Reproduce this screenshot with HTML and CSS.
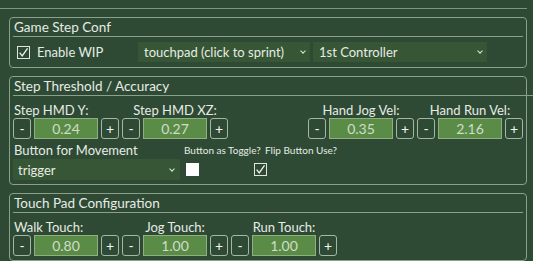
FILE: index.html
```html
<!DOCTYPE html>
<html>
<head>
	<meta charset="utf-8">
	<title>Step Detection</title>
	<link rel="stylesheet" href="styles.css">
</head>
<body>
	<!-- page header line (heading scrolled out of view) -->
	<div class="pagehead"></div>

	<!-- Game Step Conf -->
	<section class="frame f-conf">
		<h3 class="ftitle">Game Step Conf</h3>
		<div class="row row-conf">
			<label class="check">
				<span class="box on"><svg viewBox="0 0 12 12"><path d="M1.8 6.2 L4.6 9.8 L10.4 1.6" /></svg></span>
				Enable WIP
			</label>
			<div class="drop drop-mode"><span>touchpad (click to sprint)</span><i class="chev"></i></div>
			<div class="drop drop-ctrl"><span>1st Controller</span><i class="chev"></i></div>
		</div>
	</section>

	<!-- Step Threshold / Accuracy -->
	<section class="frame">
		<h3 class="ftitle wide">Step Threshold / Accuracy</h3>
		<div class="row spread">
			<div class="groups">
				<div class="group first">
					<p class="lbl">Step HMD Y:</p>
					<div class="spin"><button>-</button><div class="val">0.24</div><button>+</button></div>
				</div>
				<div class="group">
					<p class="lbl">Step HMD XZ:</p>
					<div class="spin"><button>-</button><div class="val">0.27</div><button>+</button></div>
				</div>
			</div>
			<div class="groups">
				<div class="group">
					<p class="lbl">Hand Jog Vel:</p>
					<div class="spin"><button>-</button><div class="val">0.35</div><button>+</button></div>
				</div>
				<div class="group">
					<p class="lbl">Hand Run Vel:</p>
					<div class="spin"><button>-</button><div class="val">2.16</div><button>+</button></div>
				</div>
			</div>
		</div>
		<div class="row row-btn">
			<div class="col col-move">
				<p class="lbl">Button for Movement</p>
				<div class="drop drop-trig"><span>trigger</span><i class="chev"></i></div>
			</div>
			<div class="col col-toggle">
				<p class="small">Button as Toggle?</p>
				<span class="box white"></span>
			</div>
			<div class="col col-flip">
				<p class="small">Flip Button Use?</p>
				<span class="box on"><svg viewBox="0 0 12 12"><path d="M1.8 6.2 L4.6 9.8 L10.4 1.6" /></svg></span>
			</div>
		</div>
	</section>

	<!-- Touch Pad Configuration -->
	<section class="frame">
		<h3 class="ftitle">Touch Pad Configuration</h3>
		<div class="row spread">
			<div class="groups">
				<div class="group first">
					<p class="lbl">Walk Touch:</p>
					<div class="spin"><button>-</button><div class="val">0.80</div><button>+</button></div>
				</div>
				<div class="group">
					<p class="lbl">Jog Touch:</p>
					<div class="spin"><button>-</button><div class="val">1.00</div><button>+</button></div>
				</div>
				<div class="group">
					<p class="lbl">Run Touch:</p>
					<div class="spin"><button>-</button><div class="val">1.00</div><button>+</button></div>
				</div>
			</div>
		</div>
	</section>
</body>
</html>
```

FILE: styles.css
```css
*{margin: 0;padding: 0;box-sizing: border-box;}
body{background-color: #2e4a35;color: #e6ece4;font-family: Lato,"Liberation Sans",sans-serif;font-size: 13px;overflow: hidden;}

.pagehead{height: 9px;border-bottom: 1px solid #7d957f;margin-right: 6px;}

.frame{margin: 8px 6px 0 9px;border: 1px solid #8aa08b;border-radius: 4px;padding: 0 3px 4px 3px;}
.f-conf{padding-bottom: 5px;}
.ftitle{font-size: 13.5px;font-weight: normal;line-height: 18px;height: 19px;border-bottom: 1px solid #8aa08b;padding-left: 1px;}
.ftitle.wide{margin-right: -12px;}

.row{display: flex;}
.row-conf{margin-top: 5px;align-items: center;}
.spread{justify-content: space-between;margin-top: 6px;}

/* checkbox */
.check{display: flex;align-items: center;width: 125px;padding-left: 4px;font-size: 13px;}
.box{display: inline-block;width: 13px;height: 13px;flex: none;}
.box.on{border: 1px solid #dfe6de;}
.box.on svg{display: block;width: 11px;height: 11px;}
.box.on path{fill: none;stroke: #f2f5f1;stroke-width: 1.4;}
.box.white{background-color: #fff;}
.check .box{margin-right: 7px;}

/* dropdowns */
.drop{display: flex;align-items: center;justify-content: space-between;height: 20px;background-color: #375635;padding: 0 5px 0 6px;font-size: 13px;white-space: nowrap;}
.drop-mode{width: 172px;}
.drop-ctrl{width: 174px;margin-left: 3px;}
.drop-trig{width: 167px;height: 21px;margin-top: 1px;padding-left: 5px;padding-right: 6px;}
.chev{display: block;width: 4px;height: 4px;border-right: 1px solid #dfe6de;border-bottom: 1px solid #dfe6de;transform: rotate(45deg);margin-top: -2px;}

/* spin boxes */
.groups{display: flex;gap: 3px;}
.group{display: flex;flex-direction: column;}
.lbl{font-size: 13px;line-height: 16px;text-align: center;white-space: nowrap;}
.group.first .lbl{text-align: left;padding-left: 1px;}
.spin{display: flex;gap: 3px;height: 21px;}
.spin button{width: 18px;height: 21px;border: 1px solid #a4b6a4;border-radius: 3px;background: transparent;color: #f2f5f1;font-family: Lato,"Liberation Sans",sans-serif;font-size: 14px;line-height: 18px;}
.val{width: 64px;background-color: #5b8c47;border: 1px solid #8eb07e;color: #cfdcc8;text-align: center;font-size: 14px;line-height: 19px;}

/* movement button row */
.row-btn{margin-top: 3px;}
.col{display: flex;flex-direction: column;}
.col-move{width: 168px;}
.col-move .lbl{text-align: left;padding-left: 1px;}
.small{font-size: 10px;line-height: 16px;white-space: nowrap;}
.col-toggle{width: 73px;padding-left: 3px;}
.col-toggle .box{margin-top: 5px;margin-left: 2px;}
.col-flip .small{padding-left: 11px;}
.col-flip .box{margin-top: 5px;}
```
